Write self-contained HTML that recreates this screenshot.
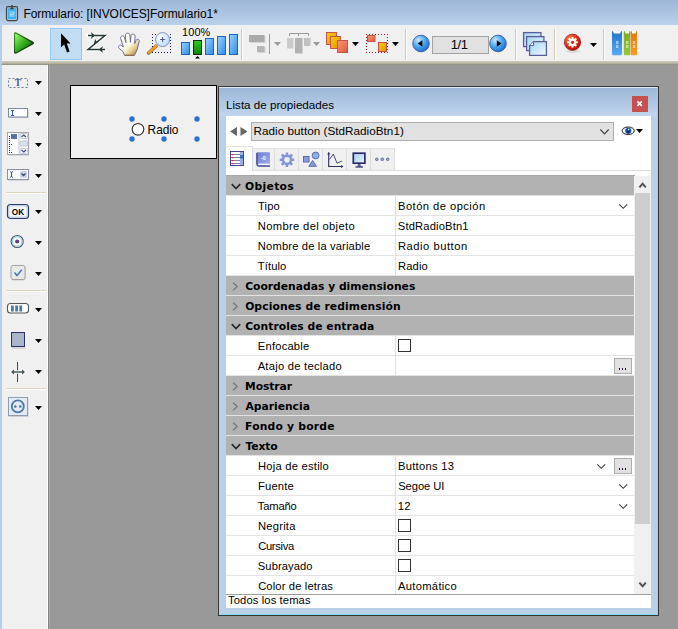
<!DOCTYPE html>
<html><head><meta charset="utf-8">
<style>
*{box-sizing:border-box;margin:0;padding:0}
html,body{width:678px;height:629px;overflow:hidden}
body{position:relative;background:#999;font-family:"Liberation Sans",sans-serif;font-size:11.2px;letter-spacing:.12px;color:#000}
.abs{position:absolute}
#titlebar{left:0;top:0;width:678px;height:25px;background:linear-gradient(#9db7d7,#bbd1ea)}
#title{left:23.4px;top:6.1px;font-size:12px;letter-spacing:-.07px;white-space:nowrap;line-height:16px}
#lborder{left:0;top:25px;width:2px;height:604px;background:#b7cee8}
#toolbar{left:2px;top:25px;width:676px;height:36px;background:#f0f0f0}
#stripe{left:2px;top:61px;width:676px;height:4px;background:linear-gradient(#d2cebe,#b6b2a2 60%,#8a887e)}
#toolbox{left:2px;top:65px;width:48px;height:564px;background:#f0f0f0;border-right:1px solid #a6a6a6;box-shadow:inset -1px 0 0 #868686,inset -2px 0 0 #fff}
#form{left:70px;top:85px;width:147px;height:74px;background:#f0f0f0;border:1px solid #000}
#pal{left:218px;top:86px;width:441px;height:530px;border:1px solid #3a3535;background:#bad0e8;box-shadow:inset -1px -1px 0 #7fdcff}
#paltitle{left:0;top:0;width:438px;height:29px;background:linear-gradient(#dde8f4 0,#dde8f4 1px,#9bb6d7 1px,#c1d6ee)}
#content{left:226px;top:116px;width:425px;height:492px;background:#fff}
.row{position:absolute;left:226px;width:409px;height:20px;border-top:1px solid #e3e3e3;background:#fff;white-space:nowrap}
.row.h{background:#b2b2b2;font-weight:bold;font-family:"DejaVu Sans","Liberation Sans",sans-serif;font-size:10.75px;letter-spacing:0}
.row .l{position:absolute;left:32px;top:3px;line-height:14px}
.row.h .l{left:20px;top:4px}
.row .v{position:absolute;left:172px;top:3px;line-height:14px}
.row .d{position:absolute;left:169px;top:0;width:1px;height:19px;background:#e0e0e0}

.chv{position:absolute;left:5px;top:7px;width:10px;height:8px}
.chr{position:absolute;left:6px;top:6px;width:7px;height:9px}
.dd{position:absolute;left:393px;top:8px;width:8.5px;height:4.8px;overflow:visible}
.dd2{left:371px}
.cb{position:absolute;left:172px;top:3px;width:13px;height:13px;border:1px solid #333;background:#fff}
.btn{position:absolute;left:388px;top:2px;width:18px;height:16px;border:1px solid #adadad;background:#e1e1e1}
.btn i{position:absolute;top:9px;width:1px;height:2px;background:#203}
#sb{left:634px;top:176px;width:17px;height:418px;background:#f0f0f0}
#thumb{left:635px;top:193px;width:15px;height:331px;background:#cdcdcd}
#sepline{left:226px;top:594px;width:425px;height:1px;background:#a0a0a0}
#status{left:228px;top:593px;line-height:14px;white-space:nowrap}
#tabline{left:226px;top:170px;width:425px;height:1px;background:#dcdcdc}
#tabs{left:252px;top:148px;width:143px;height:22px;background:#f0f0f0;border-top:1px solid #e2e2e2;border-right:1px solid #dcdcdc}
.tsep{position:absolute;top:148px;width:1px;height:22px;background:#dcdcdc}
#atab{left:226px;top:146px;width:27px;height:25px;background:#fff;border-top:1px solid #e2e2e2;border-right:1px solid #dcdcdc}
#combo{left:251px;top:122px;width:363px;height:19px;border:1px solid #adadad;background:#e1e1e1}
#combotxt{left:253.6px;top:124px;font-size:11.7px;letter-spacing:.03px;line-height:14px;white-space:nowrap}
#ptitle{left:226px;top:98px;font-size:11.65px;letter-spacing:0;line-height:14px;white-space:nowrap}
#close{left:632px;top:96px;width:16px;height:16px;background:#c75050}
#radiotxt{left:147.6px;top:121.6px;font-size:11.9px;letter-spacing:-.05px;line-height:16px;white-space:nowrap}
</style></head><body>
<div id="titlebar" class="abs"></div>
<div id="title" class="abs">Formulario: [INVOICES]Formulario1*</div>
<div id="lborder" class="abs"></div>
<div id="toolbar" class="abs"></div>
<div id="stripe" class="abs"></div>
<div id="toolbox" class="abs"></div>
<div id="form" class="abs"></div>
<div id="pal" class="abs"><div id="paltitle" class="abs"></div></div>
<div id="content" class="abs"></div>
<!--ROWS-->
<div class="row h" style="top:175px;border-top-color:#a8a8a8"><svg class="chv" viewBox="0 0 10 8"><path d="M0.8 1.2 L5 5.6 L9.2 1.2" fill="none" stroke="#2a2a2a" stroke-width="1.7"/></svg><span class="l" style="left:19.10px;letter-spacing:0.316px">Objetos</span></div>
<div class="row" style="top:195px"><span class="l" style="left:32.08px;letter-spacing:0.121px">Tipo</span><span class="d"></span><span class="v" style="left:172.02px;letter-spacing:0.452px">Botón de opción</span><svg class="dd" viewBox="0 0 9 5"><path d="M0.3 0.3 L4.5 4.5 L8.7 0.3" fill="none" stroke="#3c3c3c" stroke-width="1.1"/></svg></div>
<div class="row" style="top:215px"><span class="l" style="left:31.86px;letter-spacing:0.334px">Nombre del objeto</span><span class="d"></span><span class="v" style="left:171.82px;letter-spacing:0.150px">StdRadioBtn1</span></div>
<div class="row" style="top:235px"><span class="l" style="left:31.86px;letter-spacing:0.144px">Nombre de la variable</span><span class="d"></span><span class="v" style="left:172.02px;letter-spacing:0.516px">Radio button</span></div>
<div class="row" style="top:255px"><span class="l" style="left:31.81px;letter-spacing:0.103px">Título</span><span class="d"></span><span class="v" style="left:172.02px;letter-spacing:0.140px">Radio</span></div>
<div class="row h" style="top:275px"><svg class="chr" viewBox="0 0 7 9"><path d="M1.2 0.8 L5.2 4.5 L1.2 8.2" fill="none" stroke="#787878" stroke-width="1.3"/></svg><span class="l" style="left:19.13px;letter-spacing:0.006px">Coordenadas y dimensiones</span></div>
<div class="row h" style="top:295px"><svg class="chr" viewBox="0 0 7 9"><path d="M1.2 0.8 L5.2 4.5 L1.2 8.2" fill="none" stroke="#787878" stroke-width="1.3"/></svg><span class="l" style="left:19.13px;letter-spacing:0.104px">Opciones de redimensión</span></div>
<div class="row h" style="top:315px"><svg class="chv" viewBox="0 0 10 8"><path d="M0.8 1.2 L5 5.6 L9.2 1.2" fill="none" stroke="#2a2a2a" stroke-width="1.7"/></svg><span class="l" style="left:19.13px;letter-spacing:0.047px">Controles de entrada</span></div>
<div class="row" style="top:335px"><span class="l" style="left:31.86px;letter-spacing:0.189px">Enfocable</span><span class="d"></span><span class="cb"></span></div>
<div class="row" style="top:355px"><span class="l" style="left:31.63px;letter-spacing:0.254px">Atajo de teclado</span><span class="d"></span><span class="btn"><i style="left:4px"></i><i style="left:7px"></i><i style="left:10px"></i></span></div>
<div class="row h" style="top:375px"><svg class="chr" viewBox="0 0 7 9"><path d="M1.2 0.8 L5.2 4.5 L1.2 8.2" fill="none" stroke="#787878" stroke-width="1.3"/></svg><span class="l" style="left:19.04px;letter-spacing:-0.097px">Mostrar</span></div>
<div class="row h" style="top:395px"><svg class="chr" viewBox="0 0 7 9"><path d="M1.2 0.8 L5.2 4.5 L1.2 8.2" fill="none" stroke="#787878" stroke-width="1.3"/></svg><span class="l" style="left:19.45px;letter-spacing:-0.005px">Apariencia</span></div>
<div class="row h" style="top:415px"><svg class="chr" viewBox="0 0 7 9"><path d="M1.2 0.8 L5.2 4.5 L1.2 8.2" fill="none" stroke="#787878" stroke-width="1.3"/></svg><span class="l" style="left:19.04px;letter-spacing:0.215px">Fondo y borde</span></div>
<div class="row h" style="top:435px"><svg class="chv" viewBox="0 0 10 8"><path d="M0.8 1.2 L5 5.6 L9.2 1.2" fill="none" stroke="#2a2a2a" stroke-width="1.7"/></svg><span class="l" style="left:19.58px;letter-spacing:-0.144px">Texto</span></div>
<div class="row" style="top:455px"><span class="l" style="left:32.02px;letter-spacing:0.230px">Hoja de estilo</span><span class="d"></span><span class="v" style="left:172.02px;letter-spacing:0.263px">Buttons 13</span><svg class="dd dd2" viewBox="0 0 9 5"><path d="M0.3 0.3 L4.5 4.5 L8.7 0.3" fill="none" stroke="#3c3c3c" stroke-width="1.1"/></svg><span class="btn"><i style="left:4px"></i><i style="left:7px"></i><i style="left:10px"></i></span></div>
<div class="row" style="top:475px"><span class="l" style="left:32.02px;letter-spacing:0.172px">Fuente</span><span class="d"></span><span class="v" style="left:172.15px;letter-spacing:-0.051px">Segoe UI</span><svg class="dd" viewBox="0 0 9 5"><path d="M0.3 0.3 L4.5 4.5 L8.7 0.3" fill="none" stroke="#3c3c3c" stroke-width="1.1"/></svg></div>
<div class="row" style="top:495px"><span class="l" style="left:31.81px;letter-spacing:-0.182px">Tamaño</span><span class="d"></span><span class="v" style="left:171.67px;letter-spacing:0.286px">12</span><svg class="dd" viewBox="0 0 9 5"><path d="M0.3 0.3 L4.5 4.5 L8.7 0.3" fill="none" stroke="#3c3c3c" stroke-width="1.1"/></svg></div>
<div class="row" style="top:515px"><span class="l" style="left:32.02px;letter-spacing:0.225px">Negrita</span><span class="d"></span><span class="cb"></span></div>
<div class="row" style="top:535px"><span class="l" style="left:32.14px;letter-spacing:-0.285px">Cursiva</span><span class="d"></span><span class="cb"></span></div>
<div class="row" style="top:555px"><span class="l" style="left:31.82px;letter-spacing:0.076px">Subrayado</span><span class="d"></span><span class="cb"></span></div>
<div class="row" style="top:575px;height:19px"><span class="l" style="left:32.14px;letter-spacing:0.149px">Color de letras</span><span class="d"></span><span class="v" style="left:172.02px;letter-spacing:0.301px">Automático</span></div>
<!--/ROWS-->
<div id="sb" class="abs"></div>
<div id="thumb" class="abs"></div>
<svg class="abs" style="left:638px;top:181px" width="9" height="8" viewBox="0 0 9 8"><path d="M1.4 6.4 L4.6 2.7 L7.8 6.4" fill="none" stroke="#505050" stroke-width="2"/></svg>
<svg class="abs" style="left:638px;top:581px" width="9" height="8" viewBox="0 0 9 8"><path d="M1.4 1.6 L4.6 5.3 L7.8 1.6" fill="none" stroke="#505050" stroke-width="2"/></svg>
<div id="sepline" class="abs"></div>
<div id="status" class="abs">Todos los temas</div>
<div id="tabline" class="abs"></div>
<div id="tabs" class="abs"></div>
<div id="atab" class="abs"></div>
<div class="tsep" style="left:274px"></div><div class="tsep" style="left:298px"></div><div class="tsep" style="left:322px"></div><div class="tsep" style="left:346px"></div><div class="tsep" style="left:370px"></div>
<!--TABICONS-->
<div id="combo" class="abs"></div>
<div id="combotxt" class="abs">Radio button (StdRadioBtn1)</div>
<svg class="abs" style="left:599.5px;top:129px" width="9" height="6" viewBox="0 0 9 6"><path d="M0.3 0.5 L4.5 4.9 L8.700 0.5" fill="none" stroke="#3c3c3c" stroke-width="1.100"/></svg>
<svg class="abs" style="left:230px;top:127px" width="18" height="9" viewBox="0 0 18 9"><path d="M7 0 L7 9 L0 4.5Z M10.5 0 L17.5 4.5 L10.5 9Z" fill="#666"/></svg>
<div id="ptitle" class="abs">Lista de propiedades</div>
<div id="close" class="abs"><svg width="16" height="16" viewBox="0 0 16 16"><path d="M5.4 5.4 L9.8 9.8 M9.8 5.4 L5.4 9.8" stroke="#fff" stroke-width="1.7"/></svg></div>
<!--EYE-->
<!--FORMCONTENT-->
<div id="radiotxt" class="abs">Radio</div>
<!--TOOLBAR-->
<svg class="abs" style="left:0;top:0" width="678" height="629" viewBox="0 0 678 629">
<defs>
<linearGradient id="gPlay" x1="0" y1="0" x2="1" y2="1"><stop offset="0" stop-color="#96f66a"/><stop offset=".45" stop-color="#3cb624"/><stop offset=".9" stop-color="#0c6c08"/></linearGradient>
<linearGradient id="gPlayD" x1="0" y1="0" x2="1" y2="1"><stop offset="0" stop-color="#3c8e2a"/><stop offset=".6" stop-color="#14480c"/><stop offset="1" stop-color="#0c3008"/></linearGradient>
<linearGradient id="gBar" x1="0" y1="0" x2="1" y2="1"><stop offset="0" stop-color="#9cd2ff"/><stop offset="1" stop-color="#2a8ce6"/></linearGradient>
<linearGradient id="gGreen" x1="0" y1="0" x2="0" y2="1"><stop offset="0" stop-color="#2ecc18"/><stop offset="1" stop-color="#0a8208"/></linearGradient>
<linearGradient id="gYel" x1="0" y1="0" x2="1" y2="1"><stop offset="0" stop-color="#fbd000"/><stop offset="1" stop-color="#d89400"/></linearGradient>
<linearGradient id="gSal" x1="0" y1="0" x2="1" y2="1"><stop offset="0" stop-color="#fb9a70"/><stop offset="1" stop-color="#dc5a44"/></linearGradient>
<radialGradient id="gBlue" cx=".35" cy=".3" r=".8"><stop offset="0" stop-color="#c8e8ff"/><stop offset=".5" stop-color="#4aa4ee"/><stop offset="1" stop-color="#1464c4"/></radialGradient>
<radialGradient id="gRed" cx=".35" cy=".3" r=".8"><stop offset="0" stop-color="#ff8a50"/><stop offset=".55" stop-color="#e22a18"/><stop offset="1" stop-color="#a00808"/></radialGradient>
<linearGradient id="gPage" x1="0" y1="0" x2="1" y2="1"><stop offset="0" stop-color="#a4d6f0"/><stop offset="1" stop-color="#eefaff"/></linearGradient>
<radialGradient id="gLens" cx=".35" cy=".35" r=".8"><stop offset="0" stop-color="#ffffff"/><stop offset=".6" stop-color="#cfe8ff"/><stop offset="1" stop-color="#a8d0f8"/></radialGradient>
<linearGradient id="gHand" x1="0" y1="0" x2="1" y2="1"><stop offset="0" stop-color="#ffffdc"/><stop offset=".5" stop-color="#fffff2"/><stop offset=".72" stop-color="#e4cc8c"/><stop offset="1" stop-color="#94660f"/></linearGradient>
<linearGradient id="gBkB" x1="0" y1="0" x2="0" y2="1"><stop offset="0" stop-color="#1c72cc"/><stop offset="1" stop-color="#5cacf4"/></linearGradient>
<linearGradient id="gBkG" x1="0" y1="0" x2="0" y2="1"><stop offset="0" stop-color="#7aa828"/><stop offset="1" stop-color="#98c840"/></linearGradient>
<linearGradient id="gBkO" x1="0" y1="0" x2="0" y2="1"><stop offset="0" stop-color="#e87408"/><stop offset="1" stop-color="#ff9a28"/></linearGradient>
</defs>
<!-- clipboard title icon -->
<rect x="6.500" y="6.600" width="11" height="14" rx="1.500" fill="none" stroke="#444" stroke-width="1.200"/>
<rect x="8" y="8.300" width="8" height="10.800" fill="#3cb4ee"/>
<rect x="9.200" y="11" width="5.600" height="6" fill="#6cc8f4"/>
<path d="M10.300 8.600 H13.700 M12 5 V8.400" stroke="#444" stroke-width="1.500" fill="none"/>
<path d="M10 14 L11.400 15.500 L14.200 12.300" stroke="#c8ecfc" stroke-width="1" fill="none"/>
<!-- play -->
<path d="M15.300 33.500 L32.700 43 L15.300 52.500 Z" fill="url(#gPlayD)" stroke="url(#gPlayD)" stroke-width="2.600" stroke-linejoin="round"/>
<path d="M15.700 34.300 L31.400 43 L15.700 51.700 Z" fill="url(#gPlay)" stroke="url(#gPlay)" stroke-width="1.200" stroke-linejoin="round"/>
<!-- selected arrow -->
<rect x="50.5" y="28.5" width="31" height="31" fill="#c1dcf3" stroke="#90c8f6"/>
<path d="M61 33.2 L61 47.2 L64.2 44.4 L67 52.6 L69.6 51.6 L66.8 43.6 L70.6 43.4 Z" fill="#000"/>
<!-- Z -->
<g fill="none" stroke="#fff" stroke-width="4" stroke-linejoin="round" stroke-linecap="round" opacity=".95"><path d="M88 35.500 H105 L88 49.500 H105"/></g>
<g fill="none" stroke="#263434" stroke-width="1.500"><path d="M88 35.500 H105 L88 49.500 H105"/></g>
<path d="M90.800 32 L94.800 35.500 L90.800 39 L92 35.500Z M103 46 L99 49.500 L103 53 L101.800 49.500Z M99.400 40 L93.600 45.200 L95.200 39 L96.400 41.400Z" fill="#263434"/>
<!-- hand -->
<path d="M124.500 55.300 L123 51.500 L119.200 48.400 C117.600 46.800 119.200 44.400 121.200 45.400 L123.400 47 L120.600 38.200 C120.200 35.800 123.600 35 124.300 37.200 L126 42.600 L125.300 35 C125.300 32.600 129.700 32.600 129.900 35 L130.400 42.400 L131 35.600 C131.300 33.400 135.300 33.800 135.100 36.200 L134.700 43.600 L136 40.400 C136.900 38.400 139.800 39.200 139.200 41.400 L137 50 L134.400 55.300 Z" fill="url(#gHand)" stroke="#6c6ca8" stroke-width="1"/>
<path d="M124.800 55.300 H134.200" stroke="#8a6a28" stroke-width="1"/>
<!-- magnifier -->
<g fill="#1a1a5c">
<rect x="152" y="34" width="1" height="1"/><rect x="155" y="34" width="1" height="1"/><rect x="170" y="34" width="1" height="1"/>
<rect x="152" y="37" width="1" height="1"/><rect x="152" y="40" width="1" height="1"/><rect x="152" y="43" width="1" height="1"/><rect x="152" y="46" width="1" height="1"/><rect x="152" y="52" width="1" height="1"/>
<rect x="155" y="52" width="1" height="1"/><rect x="158" y="52" width="1" height="1"/><rect x="161" y="52" width="1" height="1"/><rect x="164" y="52" width="1" height="1"/><rect x="167" y="52" width="1" height="1"/><rect x="170" y="52" width="1" height="1"/>
<rect x="170" y="37" width="1" height="1"/><rect x="170" y="40" width="1" height="1"/><rect x="170" y="43" width="1" height="1"/><rect x="170" y="46" width="1" height="1"/><rect x="170" y="49" width="1" height="1"/>
</g>
<path d="M156 46.200 L148.600 53" stroke="#6a5a30" stroke-width="3.600" stroke-linecap="round" opacity=".8"/>
<path d="M156 46 L149 52.400" stroke="#f59a24" stroke-width="2.500" stroke-linecap="round"/>
<circle cx="162.6" cy="39.6" r="7" fill="url(#gLens)" stroke="#8a92cc" stroke-width="1"/>
<path d="M160 39.6 H165.2 M162.6 37 V42.2" stroke="#56568c" stroke-width="1"/>
<!-- zoom bars -->
<g stroke="#1a66c4" stroke-width="1" fill="url(#gBar)">
<rect x="181.500" y="42.500" width="8" height="12"/>
<rect x="205.500" y="38.500" width="8" height="16"/>
<rect x="217.500" y="36.500" width="8" height="18"/>
<rect x="229.500" y="34.500" width="8" height="20"/>
</g>
<rect x="193.500" y="40.500" width="8" height="14" fill="url(#gGreen)" stroke="#0a2e0a"/>
<path d="M195 58.500 L197.500 56 L200 58.500Z" fill="#000"/>
<text x="182.100" y="35.700" font-family="Liberation Sans, sans-serif" font-size="10.900" fill="#000">100%</text>
<!-- separators -->
<g>
<rect x="241" y="29" width="1" height="31" fill="#cfc9b4"/><rect x="242" y="29" width="1" height="31" fill="#fff"/>
<rect x="405" y="29" width="1" height="31" fill="#cfc9b4"/><rect x="406" y="29" width="1" height="31" fill="#fff"/>
<rect x="515" y="29" width="1" height="31" fill="#cfc9b4"/><rect x="516" y="29" width="1" height="31" fill="#fff"/>
<rect x="554" y="29" width="1" height="31" fill="#cfc9b4"/><rect x="555" y="29" width="1" height="31" fill="#fff"/>
<rect x="603" y="29" width="1" height="31" fill="#cfc9b4"/><rect x="604" y="29" width="1" height="31" fill="#fff"/>
</g>
<!-- align (disabled) -->
<rect x="250" y="36" width="15.500" height="7" fill="#d6d6d6"/>
<rect x="249" y="35" width="15.500" height="7" fill="#aaa"/>
<rect x="258" y="47" width="7.500" height="6" fill="#d6d6d6"/>
<rect x="257" y="46" width="7.500" height="6" fill="#b6b6b6"/>
<rect x="269" y="34" width="1" height="20" fill="#9a9a9a"/>
<path d="M274 42 H281 L277.500 46Z" fill="#9a9a9a"/>
<!-- distribute (disabled) -->
<path d="M289.500 36 V33.500 H308.500 V36 M298.500 33.500 V36" fill="none" stroke="#999" stroke-width="1"/>
<rect x="287" y="38" width="6.500" height="10.500" fill="#cbcbcb"/>
<rect x="295" y="38" width="7.500" height="15.500" fill="#b2b2b2"/>
<rect x="304" y="38" width="6.500" height="8" fill="#c2c2c2"/>
<path d="M313 42 H320 L316.500 46Z" fill="#9a9a9a"/>
<!-- layers -->
<rect x="326.500" y="32.500" width="10" height="12" fill="url(#gYel)" stroke="#c8544c"/>
<rect x="330.500" y="36.500" width="10" height="12" fill="url(#gYel)" stroke="#c8544c"/>
<rect x="337.500" y="40.500" width="10" height="12" fill="url(#gSal)" stroke="#c8544c"/>
<path d="M352 42 H359 L355.500 46Z" fill="#000"/>
<!-- group -->
<g fill="#a01818">
<rect x="366" y="34" width="1" height="1"/><rect x="369" y="34" width="1" height="1"/><rect x="372" y="34" width="1" height="1"/><rect x="375" y="34" width="1" height="1"/><rect x="378" y="34" width="1" height="1"/><rect x="381" y="34" width="1" height="1"/><rect x="384" y="34" width="1" height="1"/><rect x="387" y="34" width="1" height="1"/>
<rect x="366" y="52" width="1" height="1"/><rect x="369" y="52" width="1" height="1"/><rect x="372" y="52" width="1" height="1"/><rect x="375" y="52" width="1" height="1"/><rect x="378" y="52" width="1" height="1"/><rect x="381" y="52" width="1" height="1"/><rect x="384" y="52" width="1" height="1"/><rect x="387" y="52" width="1" height="1"/>
<rect x="366" y="37" width="1" height="1"/><rect x="366" y="40" width="1" height="1"/><rect x="366" y="43" width="1" height="1"/><rect x="366" y="46" width="1" height="1"/><rect x="366" y="49" width="1" height="1"/>
<rect x="387" y="37" width="1" height="1"/><rect x="387" y="40" width="1" height="1"/><rect x="387" y="43" width="1" height="1"/><rect x="387" y="46" width="1" height="1"/><rect x="387" y="49" width="1" height="1"/>
</g>
<rect x="367.500" y="35.500" width="7.500" height="6" fill="url(#gSal)" stroke="#c8544c"/>
<rect x="378.500" y="42.500" width="8" height="9" fill="url(#gYel)" stroke="#c8544c"/>
<path d="M392 42 H399 L395.500 46Z" fill="#000"/>
<!-- pager -->
<circle cx="421" cy="43.500" r="8.300" fill="url(#gBlue)" stroke="#2c4c9c" stroke-width=".8"/>
<path d="M422.400 40.300 V46.700 L417.700 43.500Z" fill="#000"/>
<rect x="432.500" y="36.500" width="56" height="17" fill="#e1e1e1" stroke="#a2a2a2"/>
<text x="450.800" y="49.300" letter-spacing="-.5" font-family="Liberation Sans, sans-serif" font-size="13" fill="#000">1/1</text>
<circle cx="498" cy="43.500" r="8.300" fill="url(#gBlue)" stroke="#2c4c9c" stroke-width=".8"/>
<path d="M496.800 40.300 V46.700 L501.400 43.500Z" fill="#000"/>
<!-- pages -->
<g stroke="#5c5c9c" stroke-width="1.300" fill="url(#gPage)">
<rect x="523.600" y="32.600" width="17.300" height="14"/>
<rect x="526.600" y="36.600" width="17.300" height="14"/>
<path d="M533.700 41.600 H546.400 V55.400 H529.600 V45.700Z"/><path d="M529.800 45.600 H533.600 V41.800" fill="#f4fbff" stroke-width="1"/>
</g>
<!-- red gear -->
<ellipse cx="573" cy="51.300" rx="7" ry="1.800" fill="#000" opacity=".08"/>
<circle cx="572.500" cy="42.300" r="8.200" fill="url(#gRed)" stroke="#8a1010" stroke-width=".6"/>
<g transform="translate(572.500 42.300)" fill="#fff">
<circle r="3.700"/>
<g id="teeth"><rect x="-1" y="-5.300" width="2" height="10.600"/><rect x="-5.300" y="-1" width="10.600" height="2"/></g>
<g transform="rotate(45)"><rect x="-1" y="-5.300" width="2" height="10.600"/><rect x="-5.300" y="-1" width="10.600" height="2"/></g>
<circle r="1.600" fill="#d82818"/>
</g>
<path d="M590 43 H597 L593.500 47Z" fill="#000"/>
<!-- books -->
<rect x="613.500" y="31" width="6.800" height="3" fill="#fff"/>
<rect x="625.300" y="31" width="3.800" height="3" fill="#fff"/>
<rect x="632" y="31" width="3.800" height="3" fill="#fff"/>
<path d="M612 32 Q612 31 613 31 L613.600 33.500 H620.300 L621 31 Q622 31 622 32 V54 Q622 55.300 620.800 55.300 H613.200 Q612 55.300 612 54Z" fill="url(#gBkB)"/>
<path d="M623.800 31.500 L625 31 L625.400 33.500 H629 L629.400 31 L630.300 31.500 V54.500 Q630.300 55.300 629.500 55.300 H624.600 Q623.800 55.300 623.800 54.500Z" fill="url(#gBkG)"/>
<path d="M630.700 31.500 L631.700 31 L632.100 33.500 H635.700 L636.100 31 L637 31.500 V54.500 Q637 55.300 636.200 55.300 H631.500 Q630.700 55.300 630.700 54.500Z" fill="url(#gBkO)"/>
<g fill="#fff" opacity=".5"><rect x="616" y="41" width="2.400" height="3"/><rect x="616" y="45" width="2.400" height="3"/><rect x="626" y="41" width="2.400" height="3"/><rect x="626" y="45" width="2.400" height="3"/><rect x="632.800" y="41" width="2.400" height="3"/><rect x="632.800" y="45" width="2.400" height="3"/></g>
<!--TOOLBOXICONS-->
<!-- toolbox arrows -->
<g fill="#000">
<path d="M35 81 H42 L38.500 85Z"/><path d="M35 112 H42 L38.500 116Z"/><path d="M35 143 H42 L38.500 147Z"/><path d="M35 174 H42 L38.500 178Z"/>
<path d="M35 210 H42 L38.500 214Z"/><path d="M35 241 H42 L38.500 245Z"/><path d="M35 272 H42 L38.500 276Z"/>
<path d="M35 308 H42 L38.500 312Z"/><path d="M35 339 H42 L38.500 343Z"/><path d="M35 370 H42 L38.500 374Z"/><path d="M35 406 H42 L38.500 410Z"/>
</g>
<!-- toolbox separators -->
<g>
<rect x="6" y="192" width="40" height="1" fill="#dcd4bc"/><rect x="6" y="193" width="40" height="1" fill="#fff"/>
<rect x="6" y="290" width="40" height="1" fill="#dcd4bc"/><rect x="6" y="291" width="40" height="1" fill="#fff"/>
<rect x="6" y="388" width="40" height="1" fill="#dcd4bc"/><rect x="6" y="389" width="40" height="1" fill="#fff"/>
</g>
<!-- static text -->
<rect x="8.500" y="78.500" width="19" height="9" fill="none" stroke="#6c7c9c" stroke-width="1" stroke-dasharray="2 2"/>
<text x="18" y="86.300" text-anchor="middle" font-family="Liberation Serif, serif" font-weight="bold" font-size="9.500" fill="#4a5a9c">T</text>
<!-- input -->
<rect x="9" y="109.500" width="19.500" height="8.500" fill="#b0b4bc" opacity=".7"/>
<rect x="8.500" y="108.500" width="19" height="8.500" fill="#fff" stroke="#7a8aa8"/>
<path d="M11 110.500 H14 M11 115.500 H14 M12.500 110.500 V115.500" stroke="#3a5aa8" stroke-width="1" fill="none"/>
<!-- listbox -->
<rect x="8" y="133" width="21" height="22.500" fill="#b0b0b4" opacity=".7"/>
<rect x="7.500" y="132.500" width="21" height="22" fill="#fff" stroke="#a6a6ae"/>
<rect x="18.500" y="133" width="1" height="21" fill="#c8c8d0"/>
<rect x="11" y="134" width="6" height="5" fill="#5a72a8"/>
<g fill="#333"><rect x="9" y="136" width="1" height="1"/><rect x="9" y="138" width="1" height="1"/><rect x="9" y="140" width="1" height="1"/><rect x="9" y="142" width="1" height="1"/><rect x="9" y="144" width="1" height="1"/><rect x="11" y="144" width="1" height="1"/><rect x="9" y="146" width="1" height="1"/><rect x="9" y="148" width="1" height="1"/><rect x="9" y="150" width="1" height="1"/><rect x="9" y="152" width="1" height="1"/><rect x="11" y="152" width="1" height="1"/></g>
<rect x="20" y="133.500" width="7.500" height="5" rx="1" fill="#f4f6fc" stroke="#b8c0d8" stroke-width=".8"/>
<rect x="20" y="141" width="7.500" height="5" rx="1" fill="#d8e0f0" stroke="#b8c0d8" stroke-width=".8"/>
<rect x="20" y="148.500" width="7.500" height="5" rx="1" fill="#f4f6fc" stroke="#b8c0d8" stroke-width=".8"/>
<path d="M21.500 137 L23.800 135 L26 137 M21.500 150 L23.800 152 L26 150" fill="none" stroke="#3a4a7a" stroke-width="1.200"/>
<!-- combo -->
<rect x="8" y="170" width="21" height="10.500" fill="#b0b0b4" opacity=".7"/>
<rect x="7.500" y="169.500" width="21" height="10" fill="#fff" stroke="#8a92a8"/>
<path d="M10 171.500 L11.500 172.500 L13 171.500 M10 177.500 L11.500 176.500 L13 177.500 M11.500 172.500 V176.500" stroke="#3a4a8a" stroke-width="1" fill="none"/>
<rect x="20" y="171" width="7" height="7" rx="1" fill="#ccd4e8"/>
<path d="M21.500 173.500 L23.500 175.500 L25.500 173.500" fill="none" stroke="#3a4a7a" stroke-width="1.300"/>
<!-- OK button -->
<rect x="7.500" y="204.500" width="21" height="14" rx="3" fill="#f6f6f6" stroke="#2a3c6c" stroke-width="1.200"/>
<rect x="8.800" y="205.800" width="18.400" height="11.400" rx="2" fill="none" stroke="#b4c2de" stroke-width="1"/>
<text x="18" y="214.800" text-anchor="middle" font-family="Liberation Sans, sans-serif" font-weight="bold" font-size="8.200" fill="#000">OK</text>
<!-- radio -->
<circle cx="17.200" cy="241.500" r="6" fill="#fff" stroke="#4c5c6c" stroke-width="1.200"/>
<circle cx="17.200" cy="241.500" r="4.700" fill="none" stroke="#a4d4ee" stroke-width="1.400"/>
<circle cx="17.200" cy="241.500" r="2.100" fill="#6a3a9c"/>
<!-- checkbox -->
<rect x="11.500" y="266" width="14" height="14.500" rx="2" fill="#b8b8b8" opacity=".6"/>
<rect x="11" y="265.500" width="14" height="14" rx="2" fill="#e9e9e9" stroke="#a2a2a2"/>
<path d="M14.500 272.500 L17 275.500 L21.800 269.800" fill="none" stroke="#4a7aba" stroke-width="1.500"/>
<!-- progress -->
<rect x="7.500" y="303.500" width="21" height="9.500" rx="3" fill="#fff" stroke="#585858" stroke-width="1.100"/>
<rect x="11" y="305.500" width="2.800" height="6" fill="#4a7ab0"/><rect x="15.200" y="305.500" width="2.800" height="6" fill="#4a7ab0"/><rect x="19.300" y="305.500" width="2.800" height="6" fill="#4a7ab0"/>
<!-- square -->
<rect x="10.500" y="332" width="15" height="16.500" fill="#fff"/>
<rect x="11.500" y="347.500" width="14" height="1" fill="#999" opacity=".7"/>
<rect x="11.500" y="332.500" width="13" height="14" fill="#a9b5c9" stroke="#2c2c6c"/>
<!-- splitter -->
<rect x="17" y="362" width="1" height="20" fill="#444"/>
<path d="M11 372 L14 369.200 V371.200 H22 V369.200 L25 372 L22 374.800 V372.800 H14 V374.800Z" fill="#fff" stroke="#fff" stroke-width="2" stroke-linejoin="round" opacity=".9"/><path d="M11 372 L14 369.200 V371.200 H22 V369.200 L25 372 L22 374.800 V372.800 H14 V374.800Z" fill="#4a5a5c"/>
<!-- plugin -->
<rect x="8.500" y="398" width="20" height="19" fill="#aab" opacity=".5"/>
<rect x="8.500" y="397.500" width="19" height="18" fill="#e6ebf3" stroke="#8e9cb2"/>
<circle cx="17.800" cy="406.400" r="6" fill="none" stroke="#4a78a8" stroke-width="1.800"/>
<circle cx="15.300" cy="406.500" r="1.300" fill="#4a78a8"/><circle cx="20.300" cy="406.500" r="1.300" fill="#4a78a8"/>
<!--TABICONSVG-->
<defs>
<linearGradient id="gBook" x1="0" y1="0" x2="1" y2="1"><stop offset="0" stop-color="#6c7cd4"/><stop offset="1" stop-color="#a4b0ec"/></linearGradient>
<linearGradient id="gMon" x1="0" y1="0" x2="1" y2="1"><stop offset="0" stop-color="#a8ccf4"/><stop offset="1" stop-color="#e8f4ff"/></linearGradient>
</defs>
<!-- tab1 list icon -->
<rect x="230.500" y="151.500" width="13" height="14" fill="#fff" stroke="#34348a" stroke-width=".9"/>
<rect x="240" y="152" width="3" height="13" fill="#9ab0e0"/>
<rect x="240" y="155" width="3" height="3.500" fill="#3a70bc"/>
<g stroke="#7868b0" stroke-width=".9"><path d="M231 154.500 H240 M231 157.500 H240 M231 160.500 H240 M231 163.500 H240"/></g>
<g fill="#d42020"><rect x="232" y="154" width="1.200" height="1.200"/><rect x="232" y="157" width="1.200" height="1.200"/><rect x="232" y="160" width="1.200" height="1.200"/><rect x="232" y="163" width="1.200" height="1.200"/></g>
<!-- tab2 book -->
<path d="M257.500 152.300 H269.200 Q270 152.300 270 153.200 V166.600 H258.600 Q256.400 166.600 256.400 164.400 V153.400 Q256.400 152.300 257.500 152.300Z" fill="url(#gBook)"/>
<path d="M256.900 153 V164.400 Q256.900 166.100 258.600 166.100 H270" fill="none" stroke="#30307a" stroke-width="1"/>
<path d="M258.300 164.300 H269.600" stroke="#fff" stroke-width="1.300"/>
<text x="263.500" y="160.300" text-anchor="middle" font-family="Liberation Sans, sans-serif" font-weight="bold" font-size="5.500" fill="#fff">-0</text>
<!-- tab3 gear -->
<g transform="translate(287 159.700)" fill="#8494d6">
<circle r="5.200"/>
<rect x="-1.300" y="-7.300" width="2.600" height="14.600" rx=".6"/><rect x="-7.300" y="-1.300" width="14.600" height="2.600" rx=".6"/>
<g transform="rotate(45)"><rect x="-1.300" y="-7.300" width="2.600" height="14.600" rx=".6"/><rect x="-7.300" y="-1.300" width="14.600" height="2.600" rx=".6"/></g>
<circle r="2.800" fill="#f0f0f0"/>
</g>
<!-- tab4 shapes -->
<rect x="303.500" y="156.500" width="5.500" height="5.500" fill="#8c9cda" stroke="#5a6ab2"/>
<circle cx="315.600" cy="155.500" r="3.400" fill="#8cb0e8" stroke="#5a6ab2"/>
<path d="M312.600 160.500 L316.400 166.300 H308.800Z" fill="#8c9cda" stroke="#5a6ab2"/>
<!-- tab5 chart -->
<g fill="none" stroke="#2c2c6c"><path stroke-width="1.100" d="M328.700 152.500 V166.500 H343"/><path stroke-width=".85" d="M329.500 159.500 L333.300 154 L337 163.200 L342 161"/></g>
<path d="M327.200 154.500 L328.700 152 L330.200 154.500Z M341 165 L343.500 166.500 L341 168Z" fill="#2c2c6c"/>
<!-- tab6 monitor -->
<rect x="353.300" y="153.200" width="11.600" height="10" fill="url(#gMon)" stroke="#2c2c6c" stroke-width="1.700"/>
<path d="M358 164 H360.300 L361 166.500 H357.300Z" fill="#5a5a9a"/>
<rect x="355.500" y="166.300" width="7.500" height="1.300" fill="#2c2c6c"/>
<!-- tab7 dots -->
<g fill="#a8b2d0" stroke="#56669a" stroke-width=".9"><circle cx="376.800" cy="159.300" r="1.300"/><circle cx="382.300" cy="159.300" r="1.300"/><circle cx="387.700" cy="159.300" r="1.300"/></g>
<!-- eye -->
<ellipse cx="628.200" cy="130.800" rx="6.800" ry="4.600" fill="#555" opacity=".35"/>
<ellipse cx="628.200" cy="130.800" rx="6" ry="3.700" fill="#fff" stroke="#3a3030" stroke-width="1"/>
<circle cx="628.300" cy="130.800" r="3.100" fill="#1458b0"/>
<circle cx="628.300" cy="131.500" r="1.500" fill="#0a2a6a"/>
<circle cx="628.600" cy="129.500" r=".8" fill="#fff"/>
<path d="M636 129 H643 L639.500 133Z" fill="#000"/>
<!-- form content -->
<g fill="#2a70d2"><circle cx="132" cy="119" r="2.700"/><circle cx="164" cy="119" r="2.700"/><circle cx="197" cy="119" r="2.700"/><circle cx="132" cy="139" r="2.700"/><circle cx="164" cy="139" r="2.700"/><circle cx="197" cy="139" r="2.700"/></g>
<circle cx="138" cy="129.300" r="5.800" fill="#fff" stroke="#333" stroke-width="1.100"/>
</svg>
<!--TOOLBOX-->
</body></html>
